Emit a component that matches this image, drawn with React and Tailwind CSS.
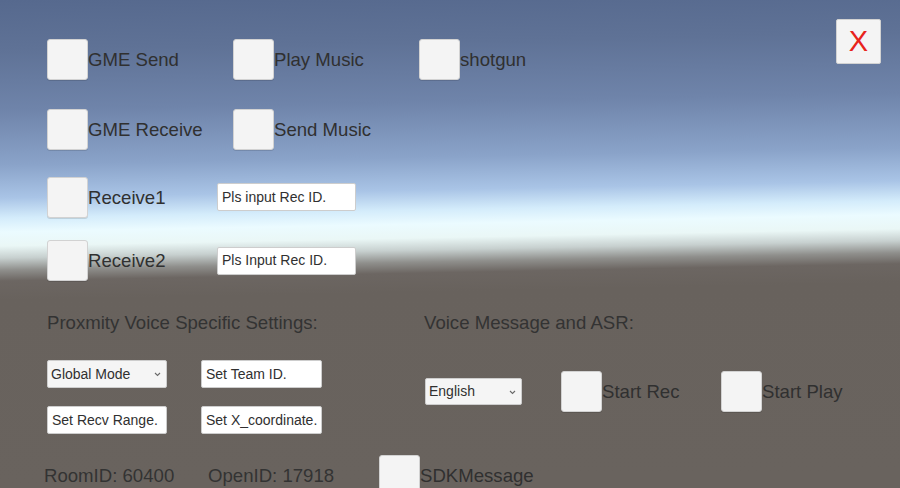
import React from 'react';

const Toggle = ({ label, className = '' }) => (
  <div className={`flex items-center h-[41px] ${className}`}>
    <div className="w-[41px] h-[41px] shrink-0 rounded-[3px] border border-[#d2d2d2] bg-[#f4f4f4] shadow-[0_1px_0_rgba(0,0,0,0.12)]" />
    <span className="text-[18.6px] leading-[22px] text-[#303030] whitespace-nowrap">{label}</span>
  </div>
);

const Field = ({ text, className = '' }) => (
  <div className={`flex items-center h-[28px] pl-[4px] rounded-[2px] border border-[#cdcdcd] bg-white text-[14px] text-[#303030] whitespace-nowrap ${className}`}>
    {text}
  </div>
);

const Dropdown = ({ text, className = '' }) => (
  <div className={`flex items-center justify-between pl-[3px] pr-[5px] rounded-[2px] border border-[#cdcdcd] bg-[#f5f5f5] text-[14px] text-[#303030] ${className}`}>
    <span>{text}</span>
    <svg width="7" height="5" viewBox="0 0 7 5" className="mt-[1px]">
      <path d="M1 1 L3.5 3.5 L6 1" fill="none" stroke="#6a6a6a" strokeWidth="1.1" />
    </svg>
  </div>
);

export default function App() {
  return (
    <div className="w-[900px] h-[488px] overflow-hidden font-['Liberation_Sans',Arial,sans-serif] bg-[linear-gradient(178.9deg,#56698e_0px,#5f7296_50px,#6f84aa_110px,#8aa3c9_165px,#a9c4e6_198px,#d4ecfb_218px,#ebfbff_232px,#eaf7f6_246px,#c7d0cf_258px,#8f8f8c_270px,#6c6662_281px,#68625d_300px,#69635e_488px)]">
      {/* top block */}
      <div className="flex justify-between">
        <div className="flex flex-col pl-[47px] pt-[39px]">
          <div className="flex">
            <Toggle label="GME Send" className="w-[186px]" />
            <Toggle label="Play Music" className="w-[186px]" />
            <Toggle label="shotgun" />
          </div>
          <div className="flex mt-[29px]">
            <Toggle label="GME Receive" className="w-[186px]" />
            <Toggle label="Send Music" />
          </div>
          <div className="flex items-center mt-[27px]">
            <Toggle label="Receive1" className="w-[170px]" />
            <Field text="Pls input Rec ID." className="w-[139px] mt-[-1px]" />
          </div>
          <div className="flex items-center mt-[22px]">
            <Toggle label="Receive2" className="w-[170px]" />
            <Field text="Pls Input Rec ID." className="w-[139px]" />
          </div>
        </div>
        <button className="mt-[19px] mr-[19px] w-[45px] h-[45px] flex items-center justify-center rounded-[2px] border border-[#d2d2d2] bg-[#f4f4f4] text-[29px] leading-none text-[#e8231b]">
          X
        </button>
      </div>

      {/* settings */}
      <div className="flex flex-col mt-[31px]">
        <div className="flex">
          <div className="w-[424px] pl-[47px] flex flex-col">
            <div className="text-[18.6px] leading-[22px] text-[#333333]">Proxmity Voice Specific Settings:</div>
            <div className="grid grid-cols-[120px_121px] gap-x-[34px] gap-y-[18px] mt-[26px]">
              <Dropdown text="Global Mode" className="h-[28px]" />
              <Field text="Set Team ID." />
              <Field text="Set Recv Range." />
              <Field text="Set X_coordinate." />
            </div>
          </div>
          <div className="flex flex-col">
            <div className="text-[18.6px] leading-[22px] text-[#333333]">Voice Message and ASR:</div>
            <div className="flex items-center mt-[37px] pl-[1px]">
              <Dropdown text="English" className="w-[97px] h-[27px] mr-[39px]" />
              <Toggle label="Start Rec" className="w-[160px]" />
              <Toggle label="Start Play" />
            </div>
          </div>
        </div>
        <div className="flex items-center h-[41px] mt-[21px] pl-[44px] text-[18.6px] leading-[22px] text-[#333333]">
          <span className="w-[164px]">RoomID: 60400</span>
          <span className="w-[171px]">OpenID: 17918</span>
          <Toggle label="SDKMessage" />
        </div>
      </div>
    </div>
  );
}
